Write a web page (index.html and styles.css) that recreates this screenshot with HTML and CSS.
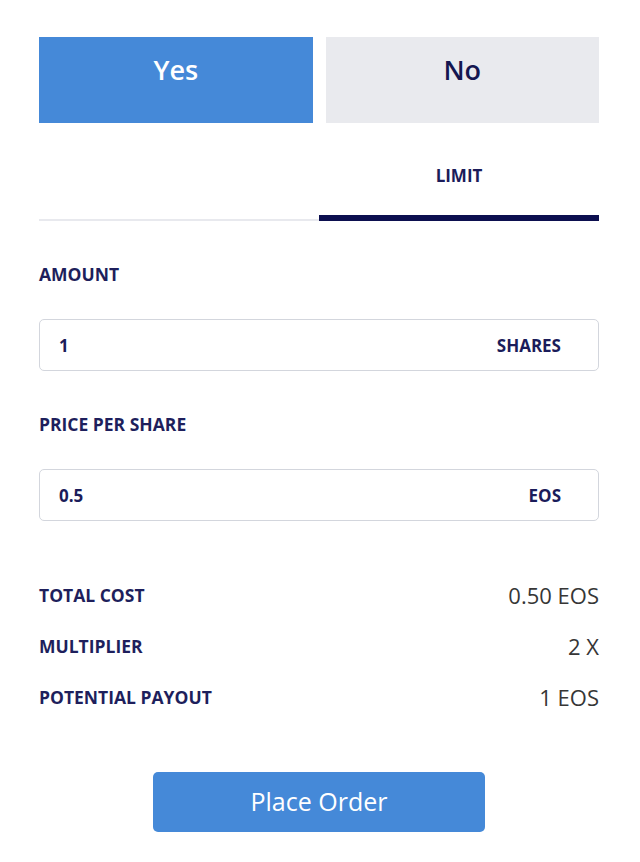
FILE: index.html
```html
<!DOCTYPE html>
<html>
<head>
<meta charset="utf-8">
<link rel="stylesheet" href="styles.css">
</head>
<body>
<div class="panel">
  <div class="choice">
    <div class="opt opt-yes">Yes</div>
    <div class="opt opt-no">No</div>
  </div>
  <div class="tabs">
    <div class="tab"></div>
    <div class="tab active">LIMIT</div>
  </div>
  <div class="field">
    <div class="label">AMOUNT</div>
    <div class="input"><span class="val">1</span><span class="unit">SHARES</span></div>
  </div>
  <div class="field">
    <div class="label">PRICE PER SHARE</div>
    <div class="input"><span class="val">0.5</span><span class="unit">EOS</span></div>
  </div>
  <div class="summary">
    <div class="row"><span class="label">TOTAL COST</span><span class="value">0.50 EOS</span></div>
    <div class="row"><span class="label">MULTIPLIER</span><span class="value">2 X</span></div>
    <div class="row"><span class="label">POTENTIAL PAYOUT</span><span class="value">1 EOS</span></div>
  </div>
  <div class="actions">
    <div class="place">Place Order</div>
  </div>
</div>
</body>
</html>
```
FILE: styles.css
```css
* { box-sizing: border-box; }
html, body { margin: 0; padding: 0; background: #ffffff; }
body { font-family: "Open Sans", "Noto Sans", sans-serif; color: #1b1c5a; }
.panel { width: 560px; margin-left: 39px; padding-top: 37px; }
.choice { display: flex; gap: 13px; }
.opt { flex: 1; height: 86px; display: flex; align-items: center; justify-content: center; font-size: 27px; font-weight: 600; padding-bottom: 22px; }
.opt-yes { background: #4589d8; color: #ffffff; }
.opt-no { background: #e9eaee; color: #141650; }
.tabs { display: flex; }
.tab { flex: 1; height: 98px; padding-top: 41px; text-align: center; font-size: 17px; line-height: 24px; font-weight: 700; color: #1b1c5a; border-bottom: 2px solid #e8e9ee; }
.tab.active { border-bottom: 6px solid #0c0f4f; border-radius: 3px 3px 0 0; }
.field { padding-top: 41px; }
.label { font-size: 17.5px; line-height: 24px; font-weight: 700; color: #1e1f5c; }
.input { margin-top: 33px; height: 52px; border: 1px solid #d3d6dd; border-radius: 5px; display: flex; align-items: center; justify-content: space-between; padding: 0 37px 0 19px; font-size: 17px; font-weight: 700; color: #1b1c5a; }
.summary { margin-top: 48px; }
.row { height: 51px; display: flex; align-items: center; justify-content: space-between; }
.value { font-size: 22px; font-weight: 400; color: #363636; }
.actions { display: flex; justify-content: center; margin-top: 50px; }
.place { width: 332px; height: 60px; background: #4589d8; color: #ffffff; border-radius: 5px; display: flex; align-items: center; justify-content: center; font-size: 25px; font-weight: 400; padding-bottom: 2px; }
```
